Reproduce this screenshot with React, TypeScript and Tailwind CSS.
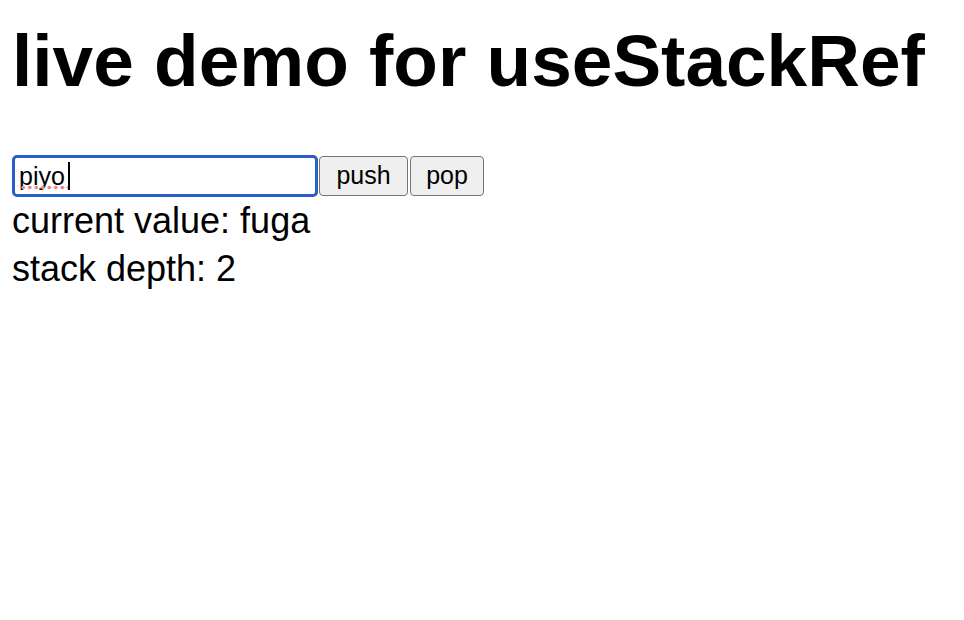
import React, { useState } from 'react';

const App: React.FC = () => {
  const [text, setText] = useState('piyo');

  return (
    <div className="min-h-screen bg-white px-3 text-black" style={{ fontFamily: '"Liberation Sans", Arial, sans-serif' }}>
      <h1 className="pt-[17px] text-[73px] font-bold leading-[88px]">live demo for useStackRef</h1>

      <div className="mt-[50px] flex h-[42px] items-stretch">
        <div className="relative w-[306px]">
          <input
            autoFocus
            value={text}
            onChange={(e) => setText(e.target.value)}
            className="h-full w-full rounded-[5px] border-[3px] border-[#2c5ec9] px-[4px] text-[25px] outline-none"
          />
          {/* spellcheck squiggle + caret */}
          <div className="pointer-events-none absolute left-[8px] top-[30px] h-[5px] w-[48px] bg-[radial-gradient(circle,#ea8a82_1.6px,transparent_2.2px)] bg-[length:6.5px_5px]"></div>
          <div className="pointer-events-none absolute left-[56px] top-[7px] h-[28px] w-[1.5px] bg-black"></div>
        </div>
        <button className="my-[1px] ml-[1px] w-[89px] rounded-[4px] border border-[#767676] bg-[#efefef] text-[25px]">
          push
        </button>
        <button className="my-[1px] ml-[2px] w-[74px] rounded-[4px] border border-[#767676] bg-[#efefef] text-[25px]">
          pop
        </button>
      </div>

      <p className="text-[36px] leading-[48px]">current value: fuga</p>
      <p className="text-[36px] leading-[48px]">stack depth: 2</p>
    </div>
  );
};

export default App;
